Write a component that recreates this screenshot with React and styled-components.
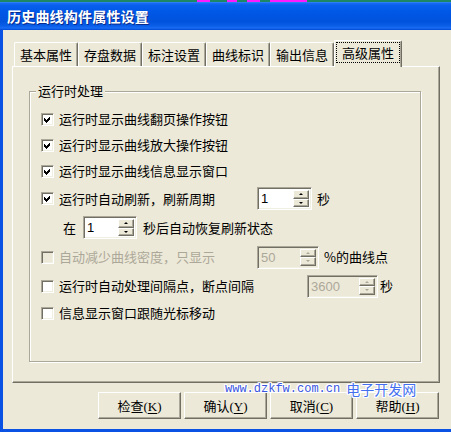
import React from 'react';
import styled, { createGlobalStyle } from 'styled-components';

const GlobalStyle = createGlobalStyle`
  html, body {
    margin: 0;
    padding: 0;
    background: #ECE9D8;
  }
  body {
    font-family: "Noto Sans CJK SC", "Liberation Sans", sans-serif;
    font-size: 13px;
    color: #000;
  }
`;

const Window = styled.div`
  position: relative;
  width: 451px;
  height: 432px;
  display: flex;
  flex-direction: column;
  overflow: hidden;
  background: #ECE9D8;
`;

// the edge of the window that sits above this one
const TopStrip = styled.div`
  height: 2px;
  background: linear-gradient(to right,
    #1d8766 0, #1d8766 197px,
    #ff1aff 197px, #ff1aff 210px, #1d8766 210px, #1d8766 227px,
    #ff1aff 227px, #ff1aff 237px, #1d8766 237px, #1d8766 247px,
    #ff1aff 247px, #ff1aff 260px, #1d8766 260px, #1d8766 270px,
    #ff1aff 270px, #ff1aff 307px, #1d8766 307px);
`;

const TitleBar = styled.div`
  height: 28px;
  display: flex;
  align-items: center;
  padding-left: 7px;
  background: linear-gradient(180deg,
    #3c8ef8 0, #1a6cf4 1px, #0a60ee 3px, #0058e6 35%,
    #0053dc 70%, #0a5ee8 86%, #1a6df4 93%, #0049d4 100%);
  color: #fff;
  font-size: 14px;
  font-weight: bold;
  text-shadow: 1px 1px 0 #0a2a8c;
  letter-spacing: 0.2px;
`;

const Frame = styled.div`
  flex: 1;
  display: flex;
  flex-direction: column;
  border-left: 3px solid #0a52e4;
  border-bottom: 3px solid #0a52e4;
  padding: 10px 11px 10px 9px;
`;

const TabStrip = styled.div`
  height: 26px;
  display: flex;
  align-items: flex-end;
  padding-left: 2px;
  position: relative;
  z-index: 1;
`;

const Tab = styled.div`
  box-sizing: border-box;
  height: ${p => (p.$active ? 27 : 24)}px;
  margin-bottom: ${p => (p.$active ? -1 : 0)}px;
  padding: ${p => (p.$active ? '1px 1px 0' : '0 5px')};
  display: flex;
  align-items: ${p => (p.$active ? 'flex-start' : 'center')};
  background: #ECE9D8;
  border-top: 1px solid #fff;
  border-left: 1px solid #fff;
  border-right: 1px solid #716F64;
  border-radius: 2px 2px 0 0;
  box-shadow: inset -1px 0 0 #ACA899;
  line-height: 20px;
  white-space: nowrap;
`;

const Focus = styled.span`
  display: block;
  height: 21px;
  box-sizing: border-box;
  padding: 0 5px;
  border: 1px dotted #000;
  line-height: 19px;
`;

const Panel = styled.div`
  flex: 1;
  display: flex;
  flex-direction: column;
  box-sizing: border-box;
  padding: 24px 18px 20px 16px;
  border-top: 1px solid #fff;
  border-left: 1px solid #fff;
  border-right: 1px solid #716F64;
  border-bottom: 1px solid #716F64;
  box-shadow: inset -1px -1px 0 #ACA899;
`;

const Group = styled.div`
  position: relative;
  flex: 1;
  display: flex;
  flex-direction: column;
  padding: 14px 0 0 11px;
  border: 1px solid #ACA899;
  box-shadow: 1px 1px 0 #fff, inset 1px 1px 0 #fff;
`;

const Legend = styled.span`
  position: absolute;
  top: -10px;
  left: 6px;
  padding: 0 2px;
  background: #ECE9D8;
  line-height: 18px;
`;

const Row = styled.div`
  display: flex;
  align-items: center;
  height: ${p => p.$h || 26}px;
  padding-left: ${p => p.$indent || 0}px;
`;

const Box = styled.span`
  position: relative;
  width: 13px;
  height: 13px;
  flex: none;
  box-sizing: border-box;
  border: 1px solid;
  border-color: #ACA899 #fff #fff #ACA899;
  box-shadow: inset 1px 1px 0 #716F64, inset -1px -1px 0 #F1EFE2;
  background: ${p => (p.$disabled ? '#ECE9D8' : '#fff')};
  margin-right: 5px;

  svg {
    position: absolute;
    left: 0;
    top: 0;
  }
`;

const Label = styled.span`
  color: ${p => (p.$disabled ? '#ACA899' : '#000')};
  width: ${p => (p.$w ? `${p.$w}px` : 'auto')};
  flex: none;
  white-space: nowrap;
  line-height: 18px;
  margin-left: ${p => p.$ml || 0}px;
`;

const SpinBox = styled.div`
  width: ${p => p.$w}px;
  height: 23px;
  flex: none;
  box-sizing: border-box;
  display: flex;
  padding: 2px;
  border: 1px solid;
  border-color: #ACA899 #fff #fff #ACA899;
  box-shadow: inset 1px 1px 0 #716F64, inset -1px -1px 0 #F1EFE2;
  background: ${p => (p.$disabled ? '#ECE9D8' : '#fff')};
  margin-left: ${p => p.$ml || 0}px;
`;

const SpinValue = styled.span`
  flex: 1;
  padding-left: 1px;
  font-family: "Liberation Sans", sans-serif;
  font-size: 13px;
  line-height: 17px;
  color: ${p => (p.$disabled ? '#ACA899' : '#000')};
`;

const SpinButtons = styled.div`
  width: 16px;
  display: flex;
  flex-direction: column;
`;

const SpinBtn = styled.div`
  flex: 1;
  display: flex;
  align-items: center;
  justify-content: center;
  box-sizing: border-box;
  background: #ECE9D8;
  border: 1px solid;
  border-color: #fff #716F64 #716F64 #fff;
  box-shadow: inset -1px -1px 0 #ACA899;

  &::after {
    content: '';
    width: 0;
    height: 0;
    border-left: 2px solid transparent;
    border-right: 2px solid transparent;
    ${p => (p.$down ? 'border-top' : 'border-bottom')}: 2px solid ${p => (p.$disabled ? '#ACA899' : '#000')};
  }
`;

const ButtonRow = styled.div`
  display: flex;
  justify-content: flex-end;
  gap: 3px;
  margin-top: 9px;
  margin-right: 1px;
`;

const Button = styled.div`
  width: 83px;
  height: 27px;
  box-sizing: border-box;
  display: flex;
  align-items: center;
  justify-content: center;
  padding-top: 2px;
  background: #ECE9D8;
  border: 1px solid;
  border-color: #fff #716F64 #716F64 #fff;
  box-shadow: inset -1px -1px 0 #ACA899;
  font-family: "Liberation Serif", "Noto Sans CJK SC", serif;
  font-size: 13px;
  line-height: 16px;

  u {
    text-underline-offset: 2px;
  }
`;

const Watermark = styled.div`
  position: absolute;
  left: 225px;
  top: 382px;
  display: flex;
  align-items: center;
  gap: 6px;
  line-height: 14px;
  pointer-events: none;
  text-shadow: 1px 0 0 #fff, -1px 0 0 #fff, 0 1px 0 #fff, 0 -1px 0 #fff,
    1px 1px 0 #fff, -1px -1px 0 #fff, 1px -1px 0 #fff, -1px 1px 0 #fff;
`;

const WmUrl = styled.span`
  font-family: "Liberation Mono", monospace;
  font-size: 12px;
  color: #3a55e0;
`;

const WmName = styled.span`
  font-family: "Noto Sans CJK SC", sans-serif;
  font-size: 14px;
  color: #4470f0;
`;

const Check = ({ checked, disabled }) => (
  <Box $disabled={disabled}>
    {checked && (
      <svg width="11" height="11" viewBox="0 0 11 11" shapeRendering="crispEdges">
        <path d="M2 4 L4 6 L8 2 L8 5 L4 9 L2 7 Z" fill="#000" />
      </svg>
    )}
  </Box>
);

const Spin = ({ value, w, ml, disabled }) => (
  <SpinBox $w={w} $ml={ml} $disabled={disabled}>
    <SpinValue $disabled={disabled}>{value}</SpinValue>
    <SpinButtons>
      <SpinBtn $disabled={disabled} />
      <SpinBtn $down $disabled={disabled} />
    </SpinButtons>
  </SpinBox>
);

const tabs = ['基本属性', '存盘数据', '标注设置', '曲线标识', '输出信息', '高级属性'];
const buttons = [
  ['检查', 'K'],
  ['确认', 'Y'],
  ['取消', 'C'],
  ['帮助', 'H'],
];

export default function App() {
  return (
    <Window>
      <GlobalStyle />
      <TopStrip />
      <TitleBar>历史曲线构件属性设置</TitleBar>
      <Frame>
        <TabStrip>
          {tabs.map((t, i) =>
            i === tabs.length - 1 ? (
              <Tab key={t} $active>
                <Focus>{t}</Focus>
              </Tab>
            ) : (
              <Tab key={t}>{t}</Tab>
            )
          )}
        </TabStrip>
        <Panel>
          <Group>
            <Legend>运行时处理</Legend>
            <Row>
              <Check checked />
              <Label>运行时显示曲线翻页操作按钮</Label>
            </Row>
            <Row>
              <Check checked />
              <Label>运行时显示曲线放大操作按钮</Label>
            </Row>
            <Row>
              <Check checked />
              <Label>运行时显示曲线信息显示窗口</Label>
            </Row>
            <Row $h={29}>
              <Check checked />
              <Label $w={198}>运行时自动刷新，刷新周期</Label>
              <Spin value="1" w={55} />
              <Label $ml={5}>秒</Label>
            </Row>
            <Row $h={29} $indent={22}>
              <Label>在</Label>
              <Spin value="1" w={54} ml={7} />
              <Label $ml={6}>秒后自动恢复刷新状态</Label>
            </Row>
            <Row $h={30}>
              <Check disabled />
              <Label $w={198} $disabled>自动减少曲线密度，只显示</Label>
              <Spin value="50" w={62} disabled />
              <Label $ml={5}>%的曲线点</Label>
            </Row>
            <Row $h={28}>
              <Check />
              <Label $w={248}>运行时自动处理间隔点，断点间隔</Label>
              <Spin value="3600" w={71} disabled />
              <Label $ml={2}>秒</Label>
            </Row>
            <Row>
              <Check />
              <Label>信息显示窗口跟随光标移动</Label>
            </Row>
          </Group>
        </Panel>
        <ButtonRow>
          {buttons.map(([name, key]) => (
            <Button key={key}>
              {name}(<u>{key}</u>)
            </Button>
          ))}
        </ButtonRow>
      </Frame>
      <Watermark>
        <WmUrl>www.dzkfw.com.cn</WmUrl>
        <WmName>电子开发网</WmName>
      </Watermark>
    </Window>
  );
}
